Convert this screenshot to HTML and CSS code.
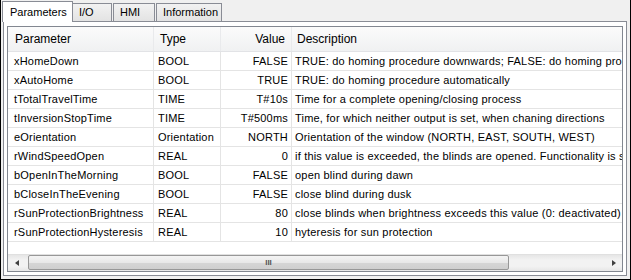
FILE: index.html
```html
<!DOCTYPE html>
<html lang="en">
<head>
    <meta charset="UTF-8">
    <title>Parameters</title>
    <link rel="stylesheet" href="styles.css">
</head>
<body>

    <div class="frame">
        <div class="tabs">
            <div class="tab active">Parameters</div>
            <div class="tab tab-io">I/O</div>
            <div class="tab tab-hmi">HMI</div>
            <div class="tab tab-info">Information</div>
        </div>

        <div class="pane">
            <div class="grid">
                <div class="row head">
                    <div class="cell c-name">Parameter</div>
                    <div class="cell c-type">Type</div>
                    <div class="cell c-value">Value</div>
                    <div class="cell c-desc">Description</div>
                </div>

                <div class="row">
                    <div class="cell c-name">xHomeDown</div>
                    <div class="cell c-type">BOOL</div>
                    <div class="cell c-value">FALSE</div>
                    <div class="cell c-desc">TRUE: do homing procedure downwards; FALSE: do homing procedure upwards</div>
                </div>
                <div class="row">
                    <div class="cell c-name">xAutoHome</div>
                    <div class="cell c-type">BOOL</div>
                    <div class="cell c-value">TRUE</div>
                    <div class="cell c-desc">TRUE: do homing procedure automatically</div>
                </div>
                <div class="row">
                    <div class="cell c-name">tTotalTravelTime</div>
                    <div class="cell c-type">TIME</div>
                    <div class="cell c-value">T#10s</div>
                    <div class="cell c-desc">Time for a complete opening/closing process</div>
                </div>
                <div class="row">
                    <div class="cell c-name">tInversionStopTime</div>
                    <div class="cell c-type">TIME</div>
                    <div class="cell c-value">T#500ms</div>
                    <div class="cell c-desc">Time, for which neither output is set, when chaning directions</div>
                </div>
                <div class="row">
                    <div class="cell c-name">eOrientation</div>
                    <div class="cell c-type">Orientation</div>
                    <div class="cell c-value">NORTH</div>
                    <div class="cell c-desc">Orientation of the window (NORTH, EAST, SOUTH, WEST)</div>
                </div>
                <div class="row">
                    <div class="cell c-name">rWindSpeedOpen</div>
                    <div class="cell c-type">REAL</div>
                    <div class="cell c-value">0</div>
                    <div class="cell c-desc">if this value is exceeded, the blinds are opened. Functionality is switched off with 0</div>
                </div>
                <div class="row">
                    <div class="cell c-name">bOpenInTheMorning</div>
                    <div class="cell c-type">BOOL</div>
                    <div class="cell c-value">FALSE</div>
                    <div class="cell c-desc">open blind during dawn</div>
                </div>
                <div class="row">
                    <div class="cell c-name">bCloseInTheEvening</div>
                    <div class="cell c-type">BOOL</div>
                    <div class="cell c-value">FALSE</div>
                    <div class="cell c-desc">close blind during dusk</div>
                </div>
                <div class="row">
                    <div class="cell c-name">rSunProtectionBrightness</div>
                    <div class="cell c-type">REAL</div>
                    <div class="cell c-value">80</div>
                    <div class="cell c-desc">close blinds when brightness exceeds this value (0: deactivated)</div>
                </div>
                <div class="row">
                    <div class="cell c-name">rSunProtectionHysteresis</div>
                    <div class="cell c-type">REAL</div>
                    <div class="cell c-value">10</div>
                    <div class="cell c-desc">hyteresis for sun protection</div>
                </div>

                <div class="filler"></div>

                <div class="hscroll">
                    <div class="arrow arrow-left"></div>
                    <div class="track">
                        <div class="thumb"><span class="grip">III</span></div>
                    </div>
                    <div class="arrow arrow-right"></div>
                </div>
            </div>
        </div>
    </div>

</body>
</html>
```

FILE: styles.css
```css
/* parameter editor */
body {
    margin: 0;
    padding: 0;
    background-color: #fff;
    font-family: 'Liberation Sans', Arial, sans-serif;
    font-size: 11px;
    color: #000;
}

.frame {
    width: 631px;
    height: 280px;
    box-sizing: border-box;
    border: 1px solid #000;
    border-top: none;
    background-color: #f0f0f0;
    display: flex;
    flex-direction: column;
}

/* tabs */
.tabs {
    display: flex;
    align-items: flex-end;
    height: 21px;
    padding-left: 1px;
}

.tab {
    box-sizing: border-box;
    height: 18px;
    padding: 2px 0 0 6px;
    border: 1px solid #898c95;
    border-bottom: none;
    background: linear-gradient(#f2f2f2, #e3e3e3);
    margin-left: -1px;
}

.tab.active {
    height: 21px;
    width: 71px;
    padding: 4px 0 0 7px;
    background: #fff;
    margin-left: 0;
    margin-bottom: -1px;
    position: relative;
    z-index: 1;
}

.tab-io { width: 40px; margin-left: -1px; }
.tab-hmi { width: 42px; margin-left: 1px; }
.tab-info { width: 66px; margin-left: 1px; }

/* tab page */
.pane {
    flex: 1;
    margin: 0 3px 3px 2px;
    border: 1px solid #898c95;
    background-color: #fff;
    padding: 4px 3px 3px 3px;
    display: flex;
}

.grid {
    flex: 1;
    border: 1px solid #828790;
    overflow: hidden;
    display: flex;
    flex-direction: column;
    background-color: #fff;
}

.row {
    display: grid;
    grid-template-columns: 146px 67px 71px 400px;
    height: 19px;
    border-bottom: 1px solid #e4e4e4;
    box-sizing: border-box;
    white-space: nowrap;
}

.row.head {
    height: 25px;
    background: linear-gradient(#fbfbfb, #f0f1f2);
    border-bottom: 1px solid #e2e3e6;
}

.cell {
    box-sizing: border-box;
    border-right: 1px solid #e4e4e4;
    padding: 2px 4px 0 6px;
    line-height: 15px;
    letter-spacing: 0.2px;
    overflow: hidden;
}

.head .cell {
    border-right: 1px solid #e9eaec;
    padding: 5px 4px 0 7px;
    font-size: 12px;
    letter-spacing: 0;
}

.c-type { padding-left: 4px; }
.head .c-type { padding-left: 6px; }

.c-value {
    text-align: right;
    padding-right: 3px;
}
.head .c-value { padding-right: 6px; }

.c-desc {
    border-right: none;
    padding-left: 3px;
    overflow: visible;
}
.head .c-desc { padding-left: 5px; }

.filler { flex: 1; }

/* horizontal scrollbar */
.hscroll {
    height: 17px;
    display: flex;
    background: linear-gradient(#e6e6e6, #f2f2f2 30%, #f2f2f2 70%, #e6e6e6);
    border-top: 1px solid #e0e0e0;
    box-sizing: border-box;
}

.arrow {
    width: 17px;
    display: flex;
    align-items: center;
    justify-content: center;
}

.arrow::after {
    content: "";
    border-top: 3px solid transparent;
    border-bottom: 3px solid transparent;
}

.arrow-left::after { border-right: 4px solid #404040; }
.arrow-right::after { border-left: 4px solid #404040; }

.track {
    flex: 1;
    padding: 0 96px 0 3px;
}

.thumb {
    height: 15px;
    box-sizing: border-box;
    border: 1px solid #979797;
    border-radius: 2px;
    background: linear-gradient(#f4f4f4, #e8e8e8 50%, #d6d6d6 51%, #cfcfcf);
    display: flex;
    align-items: center;
    justify-content: center;
}

.grip {
    font-size: 8px;
    font-weight: bold;
    color: #555;
    letter-spacing: 0;
    line-height: 8px;
}
```
